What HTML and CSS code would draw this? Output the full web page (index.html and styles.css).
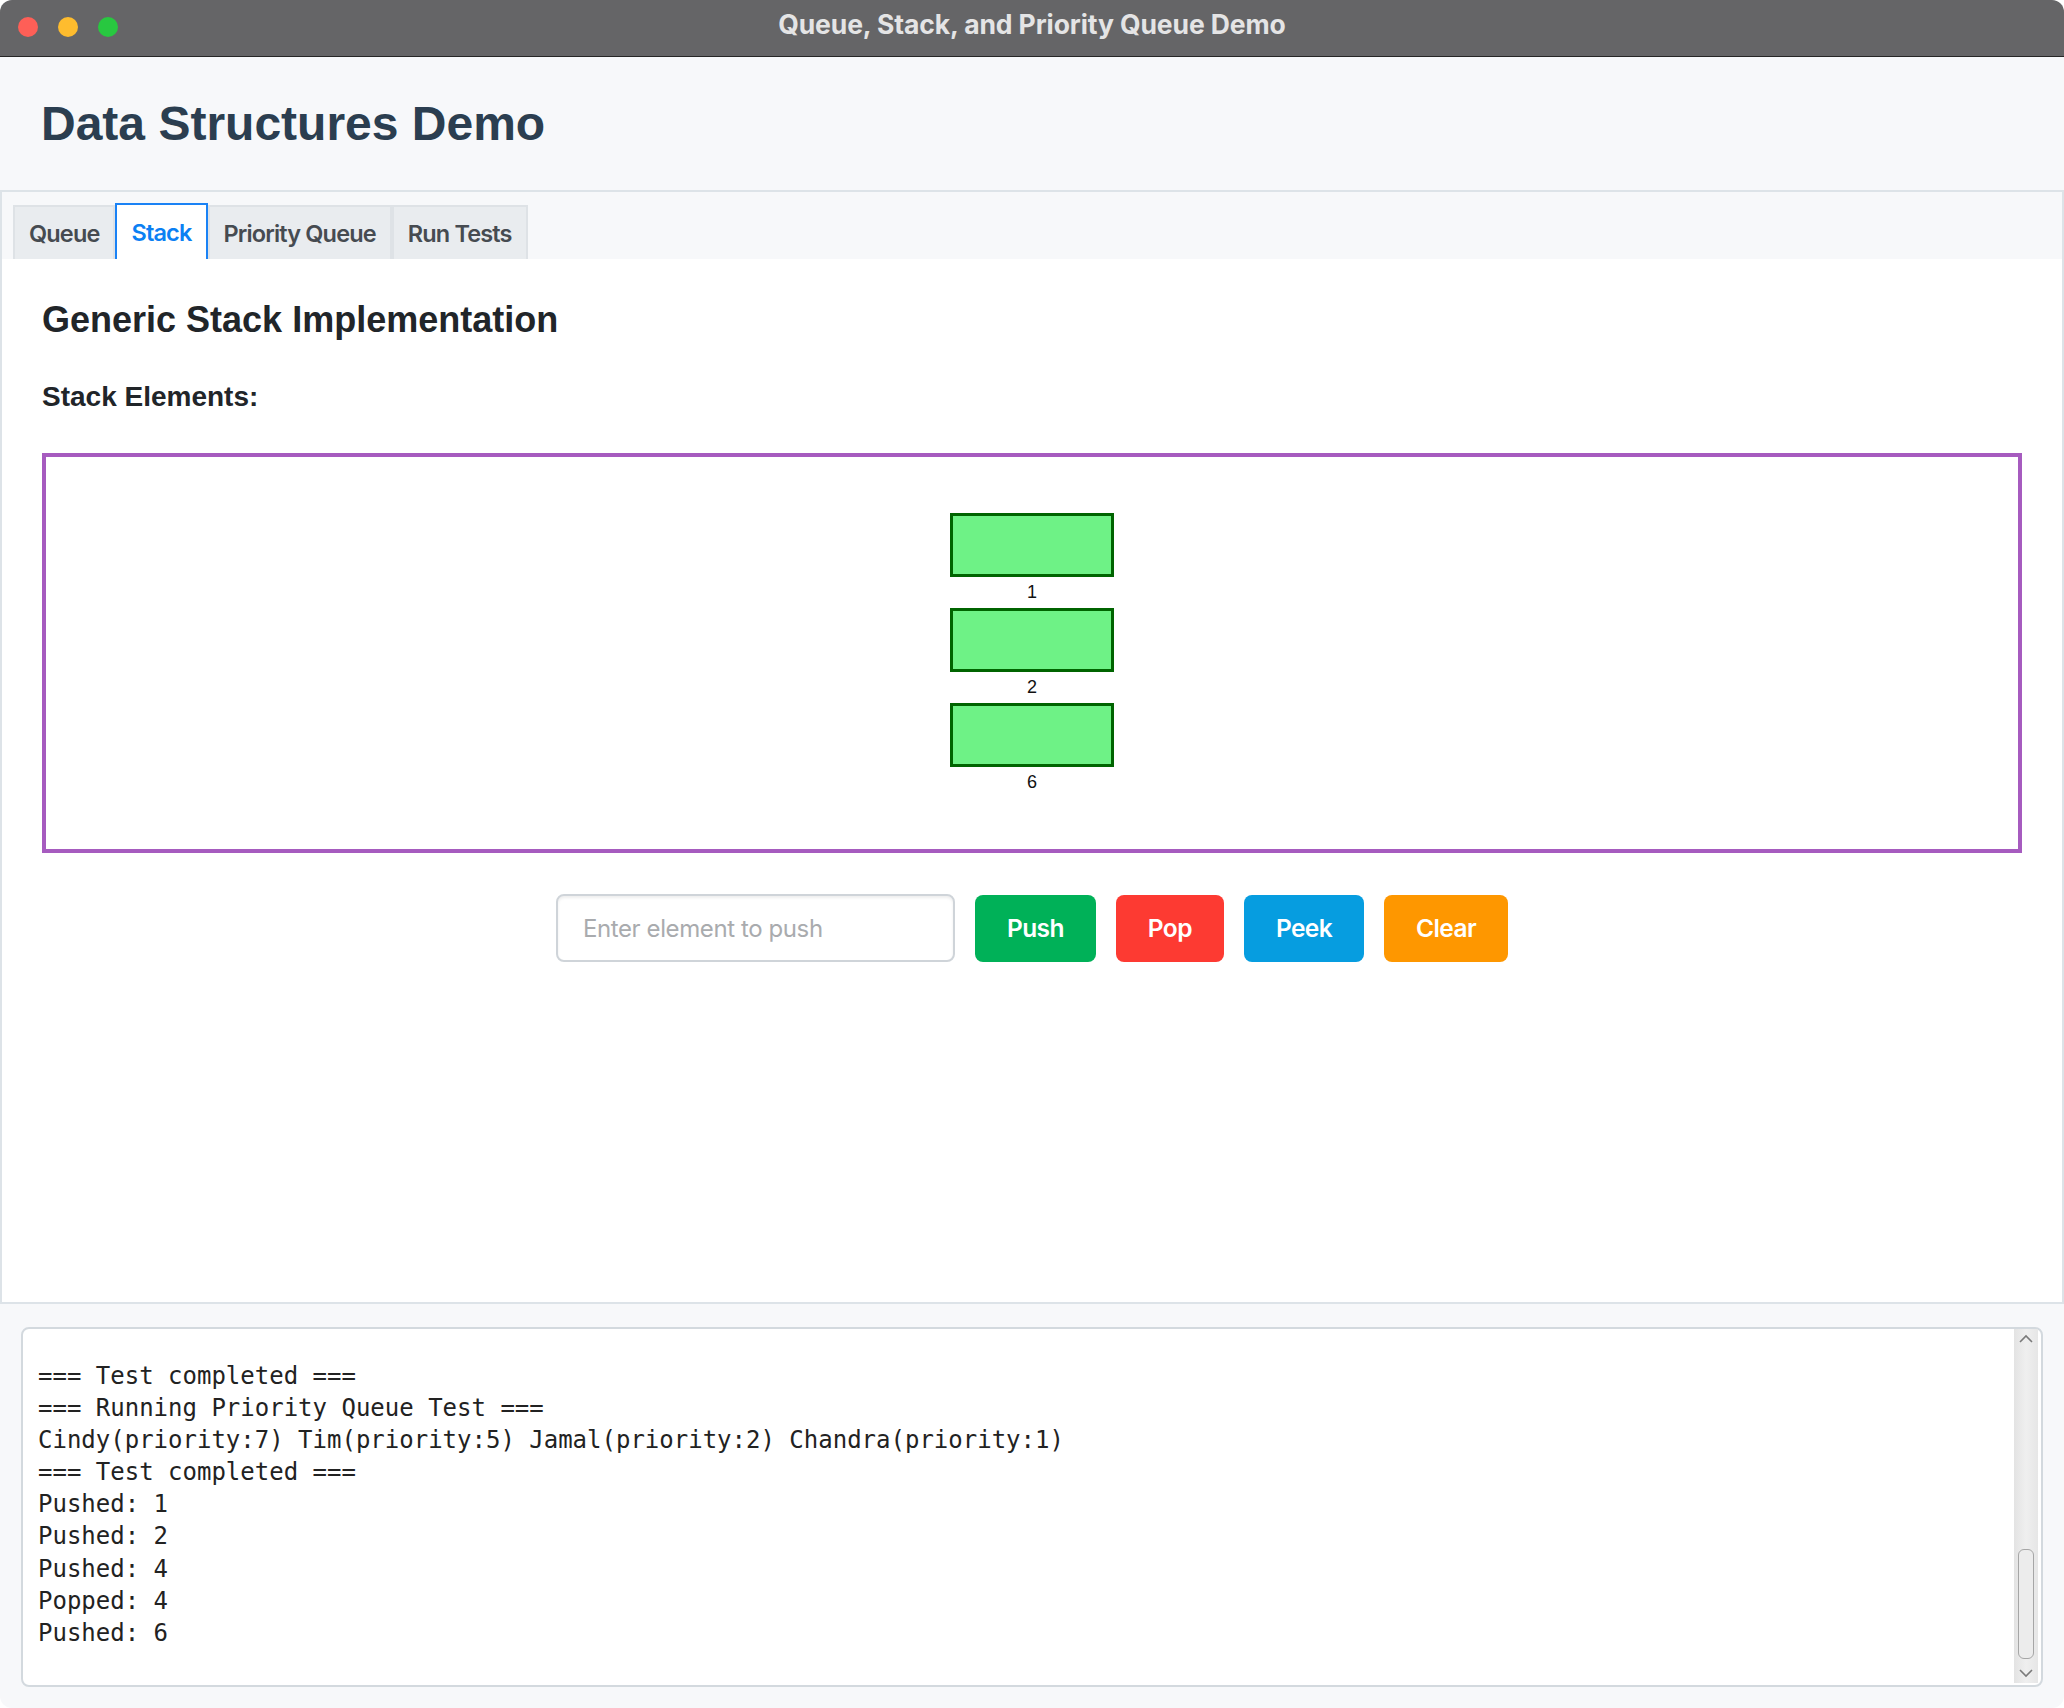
FILE: index.html
```html
<!DOCTYPE html>
<html>
<head>
<meta charset="utf-8">
<title>Queue, Stack, and Priority Queue Demo</title>
<link rel="stylesheet" href="styles.css">
</head>
<body>
<div class="window">
  <div class="titlebar">
    <div class="lights">
      <span class="light red"></span>
      <span class="light yellow"></span>
      <span class="light green"></span>
    </div>
    <div class="wintitle">Queue, Stack, and Priority Queue Demo</div>
    <div></div>
  </div>
  <div class="header">
    <h1 class="apptitle">Data Structures Demo</h1>
  </div>
  <div class="panel">
    <div class="tabstrip">
      <div class="tab">Queue</div>
      <div class="tab active">Stack</div>
      <div class="tab">Priority Queue</div>
      <div class="tab">Run Tests</div>
    </div>
    <div class="content">
      <h2 class="heading">Generic Stack Implementation</h2>
      <div class="subheading">Stack Elements:</div>
      <div class="stackbox">
        <div class="item"><div class="rect"></div><div class="label">1</div></div>
        <div class="item"><div class="rect"></div><div class="label">2</div></div>
        <div class="item"><div class="rect"></div><div class="label">6</div></div>
      </div>
      <div class="controls">
        <input class="field" type="text" placeholder="Enter element to push">
        <button class="btn push">Push</button>
        <button class="btn pop">Pop</button>
        <button class="btn peek">Peek</button>
        <button class="btn clear">Clear</button>
      </div>
    </div>
  </div>
  <div class="bottom">
    <div class="console">
      <pre class="log">=== Test completed ===
=== Running Priority Queue Test ===
Cindy(priority:7) Tim(priority:5) Jamal(priority:2) Chandra(priority:1)
=== Test completed ===
Pushed: 1
Pushed: 2
Pushed: 4
Popped: 4
Pushed: 6</pre>
      <div class="scrollbar">
        <svg class="arrow" width="16" height="10" viewBox="0 0 16 10"><path d="M2 8 L8 2 L14 8" fill="none" stroke="#7a7a7a" stroke-width="1.6"/></svg>
        <div class="track"><div class="thumb"></div></div>
        <svg class="arrow" width="16" height="10" viewBox="0 0 16 10"><path d="M2 2 L8 8 L14 2" fill="none" stroke="#7a7a7a" stroke-width="1.6"/></svg>
      </div>
    </div>
  </div>
</div>
</body>
</html>
```
FILE: styles.css
```css
html, body {
  margin: 0;
  padding: 0;
  background: #ffffff;
}
.window {
  width: 2064px;
  height: 1708px;
  border-radius: 12px;
  overflow: hidden;
  background: #f7f8fa;
  display: flex;
  flex-direction: column;
  font-family: "Liberation Sans", Arial, sans-serif;
}
.titlebar {
  height: 56px;
  flex: none;
  background: #656567;
  border-bottom: 1px solid #262626;
  display: grid;
  grid-template-columns: 1fr auto 1fr;
  align-items: start;
}
.lights {
  display: flex;
  gap: 20px;
  padding: 17px 0 0 18px;
}
.light {
  width: 20px;
  height: 20px;
  border-radius: 50%;
  display: block;
}
.red { background: #fe5f57; }
.yellow { background: #febc2e; }
.green { background: #28c840; }
.wintitle {
  font-family: Inter, "Noto Sans", sans-serif;
  font-weight: 700;
  font-size: 26.5px;
  line-height: 32px;
  padding-top: 8px;
  color: #e4e4e5;
  letter-spacing: -0.1px;
}
.header {
  height: 133px;
  flex: none;
  display: flex;
  align-items: center;
  padding-left: 41px;
  border-bottom: 2px solid #dde3e8;
}
.apptitle {
  margin: 0;
  font-size: 48px;
  font-weight: 700;
  color: #2b3e50;
  line-height: 56px;
}
.panel {
  height: 1110px;
  flex: none;
  border-left: 2px solid #dde3e8;
  border-right: 2px solid #dde3e8;
  border-bottom: 2px solid #dde3e8;
  display: flex;
  flex-direction: column;
  background: #ffffff;
}
.tabstrip {
  height: 67px;
  flex: none;
  background: #f7f8fa;
  display: flex;
  align-items: flex-end;
  padding-left: 11px;
}
.tab {
  height: 52px;
  border: 2px solid #dee2e6;
  border-bottom: none;
  background: #e9ecef;
  color: #464b51;
  font-family: Inter, "Noto Sans", sans-serif;
  font-weight: 600;
  font-size: 23.5px;
  letter-spacing: -0.85px;
  display: flex;
  align-items: center;
  padding: 0 14px;
}
.tab.active {
  height: 54px;
  border-color: #1a82f5;
  background: #ffffff;
  color: #0b80f3;
}
.content {
  flex: 1;
  padding: 40px 40px 0 40px;
  display: flex;
  flex-direction: column;
}
.heading {
  margin: 0;
  font-size: 36px;
  line-height: 42px;
  font-weight: 700;
  color: #212529;
}
.subheading {
  margin-top: 40px;
  font-size: 28px;
  line-height: 32px;
  font-weight: 700;
  color: #212529;
}
.stackbox {
  margin-top: 40px;
  border: 4px solid #a65bbf;
  display: flex;
  flex-direction: column;
  align-items: center;
  padding-top: 56px;
  box-sizing: content-box;
  height: 336px;
}
.item {
  display: flex;
  flex-direction: column;
  align-items: center;
}
.rect {
  width: 158px;
  height: 58px;
  border: 3px solid #006400;
  background: #6ef286;
}
.label {
  font-size: 18px;
  line-height: 31px;
  color: #111111;
}
.controls {
  margin-top: 41px;
  display: flex;
  justify-content: center;
  align-items: center;
  gap: 20px;
}
.field {
  width: 399px;
  height: 68px;
  box-sizing: border-box;
  border: 2px solid #cfd4d9;
  border-radius: 8px;
  padding: 0 25px;
  font-family: Inter, "Noto Sans", sans-serif;
  font-size: 24px;
  letter-spacing: -0.4px;
  background: #ffffff;
  box-shadow: inset 0 2px 3px rgba(0, 0, 0, 0.07);
  outline: none;
}
.field::placeholder {
  color: #a9abae;
}
.btn {
  height: 67px;
  border: none;
  border-radius: 8px;
  padding: 0 32px;
  color: #ffffff;
  font-family: Inter, "Noto Sans", sans-serif;
  font-weight: 600;
  font-size: 24.5px;
  letter-spacing: -0.6px;
}
.push { background: #00b158; }
.pop { background: #fd3a32; }
.peek { background: #069de0; }
.clear { background: #fe9700; }
.bottom {
  flex: 1;
  padding: 23px 21px 21px 21px;
  display: flex;
}
.console {
  flex: 1;
  border: 2px solid #d3d9de;
  border-radius: 8px;
  background: #ffffff;
  display: flex;
}
.log {
  flex: 1;
  margin: 0;
  padding: 31px 0 0 15px;
  font-family: "DejaVu Sans Mono", "Liberation Mono", monospace;
  font-size: 24px;
  line-height: 32.1px;
  color: #222222;
}
.scrollbar {
  width: 24px;
  margin: 0 3px 2px 0;
  background: linear-gradient(to right, #e3e3e3, #efefef 50%, #e6e6e6);
  display: flex;
  flex-direction: column;
  align-items: center;
}
.arrow {
  flex: none;
  margin: 5px 0;
}
.track {
  flex: 1;
  width: 100%;
  display: flex;
  flex-direction: column;
  justify-content: flex-end;
  align-items: center;
  padding-bottom: 4px;
}
.thumb {
  width: 14px;
  height: 108px;
  border: 1.5px solid #a6a6a6;
  border-radius: 6px;
  background: #ececec;
}
```
